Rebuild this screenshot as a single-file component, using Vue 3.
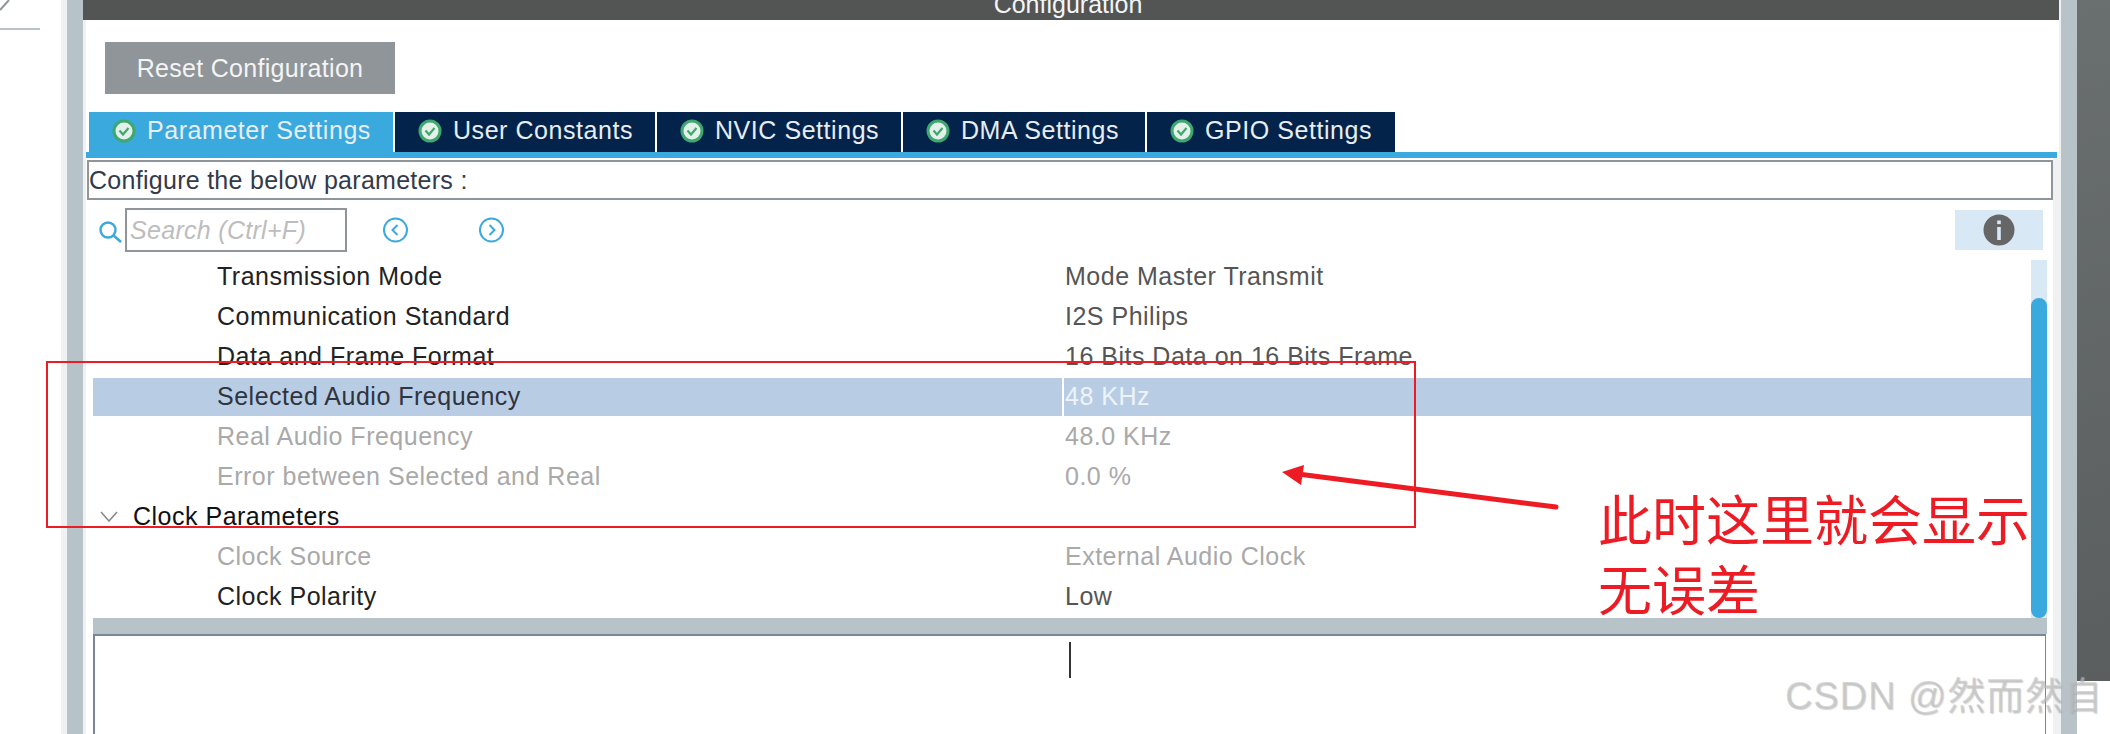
<template>
  <div class="page">
    <div class="far-left">
      <svg class="corner" width="12" height="12" viewBox="0 0 12 12"><path d="M0 10 L9 0" stroke="#8f9599" stroke-width="2" fill="none" /></svg>
      <div class="far-left-line"></div>
    </div>
    <div class="strip"></div>
    <div class="rail"></div>

    <div class="main">
      <div class="header"><span class="header-title">Configuration</span></div>
      <div class="panel">
        <div class="toolbar">
          <div class="reset-btn">Reset Configuration</div>
        </div>

        <div class="tabs">
          <div v-for="(tab, i) in tabs" :key="tab.name" class="tab" :class="{ active: i === 0 }" :style="{ width: tab.width + 'px' }">
            <svg class="tab-icon" width="24" height="24" viewBox="0 0 24 24">
              <circle cx="12" cy="12" r="11.5" fill="#3fa86f" />
              <circle cx="12" cy="12" r="8.5" fill="#e4f1ea" />
              <path d="M7.5 11.5 L11 15.5 L16.5 9" fill="none" stroke="#3fa86f" stroke-width="2.2" />
            </svg>
            <span class="tab-name">{{ tab.name }}</span>
          </div>
        </div>
        <div class="tab-line"></div>

        <div class="body">
          <div class="inner">
            <div class="describe">Configure the below parameters :</div>

            <div class="search-row">
              <svg class="search-icon" width="24" height="22" viewBox="0 0 24 22">
                <circle cx="9" cy="9" r="7.5" fill="none" stroke="#3aa9dd" stroke-width="2.4" />
                <path d="M14.5 14.5 L22 21" stroke="#3aa9dd" stroke-width="2.6" />
              </svg>
              <div class="search-box">Search (Ctrl+F)</div>
              <svg class="nav-icon prev" width="27" height="26" viewBox="0 0 27 26">
                <circle cx="13.5" cy="13" r="11.5" fill="none" stroke="#3aa9dd" stroke-width="2" />
                <path d="M15.5 8 L10.5 13 L15.5 18" fill="none" stroke="#3aa9dd" stroke-width="2" />
              </svg>
              <svg class="nav-icon next" width="27" height="26" viewBox="0 0 27 26">
                <circle cx="13.5" cy="13" r="11.5" fill="none" stroke="#3aa9dd" stroke-width="2" />
                <path d="M11.5 8 L16.5 13 L11.5 18" fill="none" stroke="#3aa9dd" stroke-width="2" />
              </svg>
              <div class="info-box">
                <svg width="32" height="32" viewBox="0 0 32 32">
                  <circle cx="16" cy="16" r="15.5" fill="#666666" />
                  <rect x="14.2" y="13" width="3.6" height="13" fill="#d9e8f5" />
                  <rect x="14.2" y="6.5" width="3.6" height="3.6" fill="#d9e8f5" />
                </svg>
              </div>
            </div>

            <div class="rows-wrap">
              <div class="rows">
                <div v-for="row in rows" :key="row.name" class="row" :class="{ selected: row.selected, disabled: row.disabled }">
                  <template v-if="row.group">
                    <div class="group-name">
                      <svg width="18" height="11" viewBox="0 0 18 11"><path d="M1 1 L9 10 L17 1" fill="none" stroke="#888888" stroke-width="1.6" /></svg>
                      <span>{{ row.name }}</span>
                    </div>
                  </template>
                  <template v-else>
                    <div class="name">{{ row.name }}</div>
                    <div class="value">{{ row.value }}</div>
                  </template>
                </div>
              </div>
              <div class="scroll-track"><div class="scroll-thumb"></div></div>
            </div>

            <div class="sep"></div>
            <div class="bottom-box"><div class="caret"></div></div>
          </div>
        </div>
      </div>
    </div>

    <div class="strip-right"></div>
    <div class="rail"></div>
    <div class="far-right"></div>

    <!-- red annotations drawn over the screenshot -->
    <div class="mark-box"></div>
    <svg class="mark-arrow" width="2110" height="734" viewBox="0 0 2110 734">
      <path d="M1298 474 L1556 507" stroke="#ed1c24" stroke-width="5" stroke-linecap="round" fill="none" />
      <path d="M1282 472 L1304 465 L1301 485 Z" fill="#ed1c24" />
    </svg>
    <div class="mark-text">此时这里就会显示<br />无误差</div>
    <div class="watermark">CSDN @然而然自</div>
  </div>
</template>

<script setup>
const tabs = [
  { name: 'Parameter Settings', width: 304 },
  { name: 'User Constants', width: 260 },
  { name: 'NVIC Settings', width: 244 },
  { name: 'DMA Settings', width: 242 },
  { name: 'GPIO Settings', width: 248 }
]

const rows = [
  { name: 'Transmission Mode', value: 'Mode Master Transmit' },
  { name: 'Communication Standard', value: 'I2S Philips' },
  { name: 'Data and Frame Format', value: '16 Bits Data on 16 Bits Frame' },
  { name: 'Selected Audio Frequency', value: '48 KHz', selected: true },
  { name: 'Real Audio Frequency', value: '48.0 KHz', disabled: true },
  { name: 'Error between Selected and Real', value: '0.0 %', disabled: true },
  { name: 'Clock Parameters', group: true },
  { name: 'Clock Source', value: 'External Audio Clock', disabled: true },
  { name: 'Clock Polarity', value: 'Low' }
]
</script>

<style>
html,
body {
  margin: 0;
  background: #ffffff;
}
</style>

<style scoped>
.page {
  position: relative;
  display: flex;
  width: 2110px;
  height: 734px;
  overflow: hidden;
  background: #ffffff;
  font-family: "Liberation Sans", Arial, sans-serif;
  font-size: 25px;
  letter-spacing: 0.5px;
}

.far-left {
  position: relative;
  width: 61px;
  flex-shrink: 0;
}

.corner {
  position: absolute;
  left: 0;
  top: 0;
}

.far-left-line {
  width: 40px;
  height: 2px;
  margin-top: 28px;
  background: #b7c2c9;
}

.strip {
  width: 6px;
  flex-shrink: 0;
  background: #eff1f3;
}

.rail {
  width: 16px;
  flex-shrink: 0;
  background: #b7c2c9;
}

.main {
  width: 1976px;
  flex-shrink: 0;
  display: flex;
  flex-direction: column;
}

.header {
  height: 20px;
  flex-shrink: 0;
  padding-right: 6px;
  background: #535554;
  color: #f2f6f8;
  text-align: center;
  overflow: hidden;
  line-height: 8px;
}

.header-title {
  letter-spacing: 0;
}

.panel {
  flex: 1;
  display: flex;
  flex-direction: column;
  border-left: 3px solid #eff1f3;
}

.toolbar {
  height: 92px;
  padding: 22px 0 0 19px;
  box-sizing: border-box;
  flex-shrink: 0;
}

.reset-btn {
  width: 290px;
  height: 52px;
  line-height: 52px;
  text-align: center;
  background: #8f9599;
  color: #f4f4f4;
  letter-spacing: 0.3px;
}

.tabs {
  display: flex;
  gap: 2px;
  height: 40px;
  padding-left: 3px;
  flex-shrink: 0;
}

.tab {
  display: flex;
  align-items: center;
  height: 40px;
  padding: 0 0 3px 23px;
  box-sizing: border-box;
  background: #03234b;
  color: #e8edf2;
  letter-spacing: 0.55px;
}

.tab.active {
  background: #3aa9dd;
}

.tab-name {
  margin-left: 11px;
}

.tab-line {
  height: 6px;
  margin-right: 2px;
  flex-shrink: 0;
  background: #3aa9dd;
}

.body {
  flex: 1;
  background: #eff1f3;
  min-height: 0;
}

.inner {
  width: 1967px;
  height: 100%;
  background: #ffffff;
  display: flex;
  flex-direction: column;
  padding-top: 2px;
  box-sizing: border-box;
}

.describe {
  height: 40px;
  margin-left: 1px;
  flex-shrink: 0;
  box-sizing: border-box;
  border: 2px solid #8f9599;
  line-height: 36px;
  color: #333a4a;
  letter-spacing: 0.28px;
}

.search-row {
  display: flex;
  align-items: flex-start;
  height: 58px;
  flex-shrink: 0;
  padding-left: 13px;
  box-sizing: border-box;
}

.search-icon {
  margin-top: 21px;
  flex-shrink: 0;
}

.search-box {
  width: 222px;
  height: 44px;
  margin: 8px 0 0 2px;
  box-sizing: border-box;
  border: 2px solid #8f9599;
  padding-left: 3px;
  line-height: 40px;
  font-style: italic;
  color: #bdbdbd;
  letter-spacing: 0.3px;
  flex-shrink: 0;
}

.nav-icon {
  margin-top: 17px;
  flex-shrink: 0;
}

.nav-icon.prev {
  margin-left: 35px;
}

.nav-icon.next {
  margin-left: 69px;
}

.info-box {
  width: 88px;
  height: 40px;
  margin: 10px 10px 0 auto;
  display: flex;
  align-items: center;
  justify-content: center;
  background: #d9e8f5;
}

.rows-wrap {
  display: flex;
  height: 360px;
  flex-shrink: 0;
  padding-left: 7px;
}

.rows {
  width: 1938px;
  flex-shrink: 0;
}

.row {
  display: flex;
  height: 40px;
  line-height: 36px;
  color: #222222;
  box-sizing: border-box;
}

.row.selected {
  height: 38px;
  line-height: 36px;
  margin-bottom: 2px;
  background: #b8cde4;
}

.name {
  width: 969px;
  padding-left: 124px;
  box-sizing: border-box;
  flex-shrink: 0;
}

.value {
  flex: 1;
  padding-left: 3px;
  color: #555555;
}

.row.selected .name {
  color: #2f3440;
}

.row.selected .value {
  color: #eef3f9;
  border-left: 2px solid #ffffff;
  padding-left: 1px;
}

.row.disabled .name,
.row.disabled .value {
  color: #a9a9a9;
}

.group-name {
  display: flex;
  align-items: center;
  height: 36px;
  padding-left: 7px;
  color: #111111;
}

.group-name span {
  margin-left: 15px;
}

.scroll-track {
  width: 16px;
  margin-top: 2px;
  display: flex;
  flex-direction: column;
  justify-content: flex-end;
  background: #d9e8f5;
}

.scroll-thumb {
  height: 320px;
  border-radius: 8px;
  background: #3aa9dd;
}

.sep {
  height: 16px;
  margin-left: 7px;
  width: 1954px;
  flex-shrink: 0;
  background: #b7c2c9;
}

.bottom-box {
  flex: 1;
  position: relative;
  margin-left: 7px;
  width: 1953px;
  box-sizing: border-box;
  border-top: 2px solid #78889a;
  border-left: 2px solid #78889a;
  border-right: 1px solid #78889a;
}

.caret {
  position: absolute;
  left: 974px;
  top: 6px;
  width: 2px;
  height: 36px;
  background: #333333;
}

.strip-right {
  width: 2px;
  flex-shrink: 0;
  background: #eff1f3;
}

.far-right {
  width: 35px;
  height: 681px;
  flex-shrink: 0;
  background: linear-gradient(160deg, #6a6f70, #5a5e5f);
}

.mark-box {
  position: absolute;
  left: 46px;
  top: 361px;
  width: 1370px;
  height: 167px;
  box-sizing: border-box;
  border: 2px solid #ed1c24;
}

.mark-arrow {
  position: absolute;
  left: 0;
  top: 0;
  pointer-events: none;
}

.mark-text {
  position: absolute;
  left: 1598px;
  top: 483px;
  font-family: "Noto Sans CJK SC", sans-serif;
  font-size: 54px;
  line-height: 70px;
  letter-spacing: 0;
  color: #ed1c24;
  white-space: nowrap;
}

.watermark {
  position: absolute;
  left: 1785px;
  top: 672px;
  font-family: "Liberation Sans", "Noto Sans CJK SC", sans-serif;
  font-size: 38px;
  line-height: 48px;
  letter-spacing: 0.9px;
  color: rgba(190, 190, 190, 0.6);
  text-shadow: 1px 1px 1px rgba(150, 150, 150, 0.4);
  white-space: nowrap;
}
</style>
